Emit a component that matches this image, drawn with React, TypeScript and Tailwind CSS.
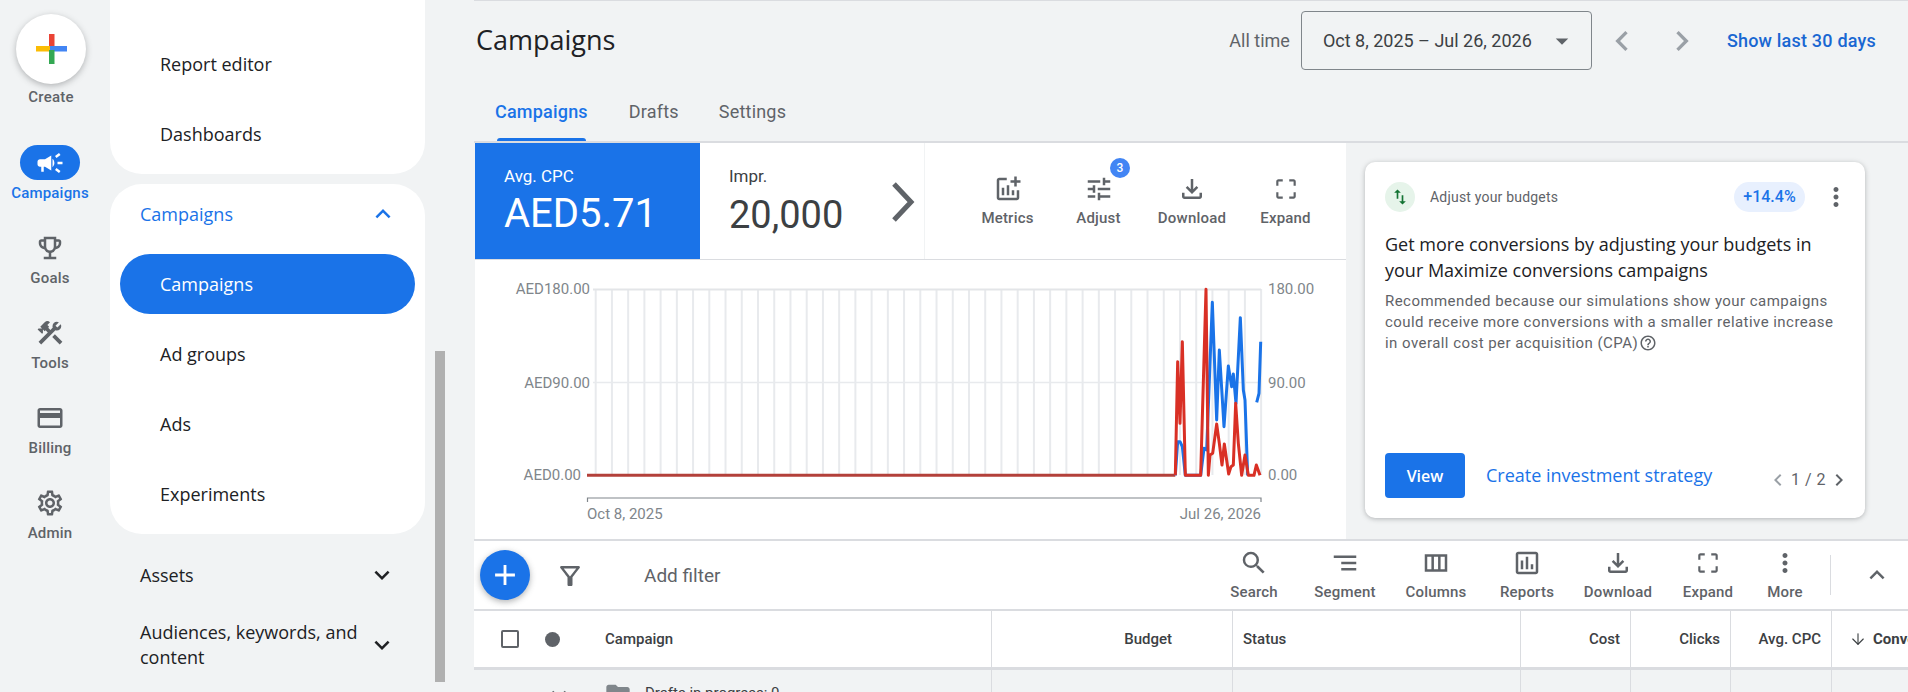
import type { ReactNode } from "react";
import { ArrowDown } from "lucide-react";
import {
  MdAdd,
  MdArrowDropDown,
  MdCampaign,
  MdChevronLeft,
  MdChevronRight,
  MdConstruction,
  MdCropFree,
  MdExpandLess,
  MdExpandMore,
  MdFolder,
  MdHelpOutline,
  MdMoreVert,
  MdOutlineAddchart,
  MdOutlineAssessment,
  MdOutlineCreditCard,
  MdOutlineEmojiEvents,
  MdOutlineFileDownload,
  MdOutlineFilterAlt,
  MdOutlineSettings,
  MdOutlineViewColumn,
  MdSearch,
  MdSegment,
  MdSwapVert,
  MdTune,
} from "react-icons/md";

const railItems = [
  { label: "Goals", icon: <MdOutlineEmojiEvents size={30} /> },
  { label: "Tools", icon: <MdConstruction size={30} /> },
  { label: "Billing", icon: <MdOutlineCreditCard size={30} /> },
  { label: "Admin", icon: <MdOutlineSettings size={30} /> },
];

const subItems = ["Ad groups", "Ads", "Experiments"];

const tableTools = [
  { label: "Search", center: "w-[90px]", icon: <MdSearch size={30} /> },
  { label: "Segment", center: "w-[92px]", icon: <MdSegment size={30} /> },
  { label: "Columns", center: "w-[90px]", icon: <MdOutlineViewColumn size={30} /> },
  { label: "Reports", center: "w-[92px]", icon: <MdOutlineAssessment size={30} /> },
  { label: "Download", center: "w-[90px]", icon: <MdOutlineFileDownload size={30} /> },
  { label: "Expand", center: "w-[90px]", icon: <MdCropFree size={26} /> },
  { label: "More", center: "w-[64px]", icon: <MdMoreVert size={30} /> },
];

const grid = Array.from({ length: 42 }, (_, i) => 595.7 + i * 16.23);

// traced from the picture, in crop units of the right hand end of the chart
const toPoints = (pts: number[][]) =>
  pts.map(([x, y]) => `${1100 + x / 3},${270 + y / 3}`).join(" ");

const redLine = toPoints([
  [226, 616], [233, 275], [240, 460], [247, 215], [256, 616], [302, 616], [318, 58], [325, 616],
  [330, 555], [338, 550], [350, 462], [358, 520], [366, 585], [373, 522], [386, 612], [393, 590],
  [400, 585], [407, 400], [415, 520], [425, 616], [435, 555], [445, 616], [462, 616], [469, 585],
  [480, 616],
]);

const blueLine = toPoints([
  [226, 616], [233, 515], [240, 515], [247, 530], [256, 616], [302, 616], [312, 535], [320, 540],
  [337, 97], [350, 450], [358, 240], [372, 470], [385, 288], [395, 350], [400, 312], [408, 400],
  [421, 143], [430, 360], [435, 390], [443, 616],
]);

function ToolButton({ label, icon, className }: { label: string; icon: ReactNode; className: string }) {
  return (
    <div className={`flex flex-col items-center text-[#5f6368] ${className}`}>
      <div className="flex h-[30px] items-center justify-center">{icon}</div>
      <span className="mt-[4px] whitespace-nowrap text-[15px] font-medium leading-[20px] tracking-[0.2px]">{label}</span>
    </div>
  );
}

function Rail() {
  return (
    <aside className="flex w-[110px] shrink-0 flex-col items-center pr-[10px]">
      <div className="mt-[14px] ml-[2px] flex size-[70px] items-center justify-center rounded-full bg-white shadow-[0_2px_6px_rgba(60,64,67,0.35)]">
        <svg width="32" height="32" viewBox="0 0 32 32">
          <rect x="14" y="1" width="5.5" height="16" fill="#ea4335" />
          <rect x="1" y="13" width="15" height="5.5" fill="#fbbc04" />
          <rect x="15" y="13" width="17" height="5.5" fill="#4285f4" />
          <rect x="14" y="17" width="5.5" height="14" fill="#34a853" />
        </svg>
      </div>
      <span className="mt-[3px] ml-[2px] text-[15px] font-medium leading-[20px] tracking-[0.2px] text-[#5f6368]">Create</span>
      <div className="mt-[38px] flex h-[85px] flex-col items-center">
        <div className="flex h-[35px] w-[60px] items-center justify-center rounded-full bg-[#1a73e8] text-white">
          <MdCampaign size={30} />
        </div>
        <span className="mt-[3px] text-[15px] font-medium leading-[20px] tracking-[0.2px] text-[#1a73e8]">Campaigns</span>
      </div>
      {railItems.map((item) => (
        <div className="flex h-[85px] flex-col items-center text-[#5f6368]" key={item.label}>
          <div className="flex h-[35px] items-center justify-center">{item.icon}</div>
          <span className="mt-[3px] text-[15px] font-medium leading-[20px] tracking-[0.2px]">{item.label}</span>
        </div>
      ))}
    </aside>
  );
}

function NavPanel() {
  const navText = "font-['Open_Sans',sans-serif] text-[18px] leading-[30px]";
  return (
    <nav className="flex w-[364px] shrink-0">
      <div className={`w-[315px] text-[#202124] ${navText}`}>
        <div className="rounded-b-[32px] bg-white pb-[5px] pl-[50px] pt-[29px]">
          <div className="flex h-[70px] items-center">Report editor</div>
          <div className="flex h-[70px] items-center">Dashboards</div>
        </div>
        <div className="mt-[10px] rounded-[32px] bg-white pb-[5px]">
          <div className="mb-[5px] flex h-[60px] items-center justify-between pl-[30px] pr-[27px] text-[#1a73e8]">
            <span>Campaigns</span>
            <MdExpandLess size={30} />
          </div>
          <div className="flex h-[70px] items-center px-[10px]">
            <div className="flex h-[60px] w-full items-center rounded-full bg-[#1a73e8] pl-[40px] font-medium text-white">Campaigns</div>
          </div>
          {subItems.map((item) => (
            <div className="flex h-[70px] items-center pl-[50px]" key={item}>
              {item}
            </div>
          ))}
        </div>
        <div className="mt-[6px] flex h-[70px] items-center justify-between pl-[30px] pr-[28px]">
          <span>Assets</span>
          <MdExpandMore size={30} />
        </div>
        <div className="flex h-[70px] items-center justify-between pl-[30px] pr-[28px]">
          <span className="w-[225px] leading-[25px]">Audiences, keywords, and content</span>
          <MdExpandMore size={30} />
        </div>
      </div>
      <div className="ml-[10px] mt-[351px] h-[331px] w-[10px] bg-[#b0b0b0]" />
    </nav>
  );
}

function Chart() {
  return (
    <svg className="block h-[279px] w-[871px]" viewBox="475 260 871 279">
      {grid.map((x) => (
        <line key={x} x1={x} x2={x} y1="289" y2="475" stroke="#e8eaed" strokeWidth="2" />
      ))}
      <line x1="593" x2="1261" y1="289.5" y2="289.5" stroke="#e3e5e8" strokeWidth="2" />
      <line x1="593" x2="1261" y1="382.5" y2="382.5" stroke="#e8eaed" strokeWidth="1.5" />
      <polyline points="587,475.3 1175.3,475.3" fill="none" stroke="#b3403a" strokeWidth="3" />
      <polyline points={blueLine} fill="none" stroke="#1a73e8" strokeWidth="3" strokeLinejoin="round" />
      <polyline points="1256.7,402.3 1259,393.3 1260.7,341.7" fill="none" stroke="#1a73e8" strokeWidth="3" strokeLinejoin="round" />
      <polyline points={redLine} fill="none" stroke="#d93025" strokeWidth="3" strokeLinejoin="round" />
      <path d="M587.5 502V498H1261V502" fill="none" stroke="#80868b" strokeWidth="1.2" />
      <g fontFamily="Roboto, sans-serif" fontSize="15" fill="#80868b">
        <text x="590" y="294" textAnchor="end">AED180.00</text>
        <text x="590" y="388" textAnchor="end">AED90.00</text>
        <text x="581" y="480" textAnchor="end">AED0.00</text>
        <text x="1268" y="294">180.00</text>
        <text x="1268" y="388">90.00</text>
        <text x="1268" y="480">0.00</text>
        <text x="587" y="519">Oct 8, 2025</text>
        <text x="1261" y="519" textAnchor="end">Jul 26, 2026</text>
      </g>
    </svg>
  );
}

function Scorecards() {
  return (
    <div className="flex h-[117px] border-b border-[#dadce0]">
      <div className="w-[225px] bg-[#1a73e8] pl-[29px] pt-[23px] text-white">
        <div className="text-[17px] leading-[20px]">Avg. CPC</div>
        <div className="mt-[5px] text-[40px] leading-[46px]">AED5.71</div>
      </div>
      <div className="relative w-[225px] border-r border-[#f1f3f4] pl-[29px] pt-[23px] text-[#3c4043]">
        <div className="text-[17px] leading-[20px]">Impr.</div>
        <div className="mt-[6px] text-[38px] leading-[46px]">20,000</div>
        <svg className="absolute left-[189px] top-[38px]" width="30" height="42" viewBox="0 0 30 42">
          <path d="M5 3l17 18L5 39" fill="none" stroke="#5f6368" strokeWidth="5" />
        </svg>
      </div>
      <div className="flex flex-1 pl-[37px] pt-[31px]">
        <ToolButton className="w-[91px]" label="Metrics" icon={<MdOutlineAddchart size={30} />} />
        <div className="relative w-[91px]">
          <ToolButton className="w-[91px]" label="Adjust" icon={<MdTune size={30} />} />
          <span className="absolute -top-[16px] left-[57px] flex size-[20px] items-center justify-center rounded-full bg-[#4285f4] text-[12px] font-medium text-white">3</span>
        </div>
        <ToolButton className="w-[96px]" label="Download" icon={<MdOutlineFileDownload size={30} />} />
        <ToolButton className="w-[91px]" label="Expand" icon={<MdCropFree size={26} />} />
      </div>
    </div>
  );
}

function RecommendationCard() {
  return (
    <div className="mx-[19px] mt-[19px] flex h-[356px] w-[500px] flex-col rounded-[10px] bg-white px-[20px] shadow-[0_1px_5px_rgba(60,64,67,0.35)]">
      <div className="mt-[20px] flex h-[30px] items-center">
        <div className="flex size-[30px] items-center justify-center rounded-full bg-[#e6f4ea] text-[#137333]">
          <MdSwapVert size={20} />
        </div>
        <span className="ml-[15px] text-[14px] tracking-[0.2px] text-[#5f6368]">Adjust your budgets</span>
        <span className="ml-auto flex h-[30px] w-[71px] items-center justify-center rounded-full bg-[#e8f0fe] text-[16px] font-medium text-[#1a73e8]">+14.4%</span>
        <span className="ml-[16px] mr-[-6px] text-[#5f6368]">
          <MdMoreVert size={30} />
        </span>
      </div>
      <h3 className="mt-[19px] max-w-[445px] font-['Open_Sans',sans-serif] text-[18px] font-medium leading-[26px] text-[#202124]">
        Get more conversions by adjusting your budgets in your Maximize conversions campaigns
      </h3>
      <p className="mt-[8px] text-[15px] leading-[21px] tracking-[0.45px] text-[#5f6368]">
        Recommended because our simulations show your campaigns could receive more conversions with a smaller relative increase in overall cost per acquisition (CPA)
        <MdHelpOutline className="ml-[1px] inline align-[-4px]" size={18} />
      </p>
      <div className="mt-auto mb-[20px] flex items-center">
        <button className="h-[45px] w-[80px] rounded-[4px] bg-[#1a73e8] font-['Open_Sans',sans-serif] text-[16px] font-semibold text-white">View</button>
        <span className="ml-[21px] font-['Open_Sans',sans-serif] text-[18px] font-medium text-[#1a73e8]">Create investment strategy</span>
        <div className="ml-auto mr-[-6px] mt-[9px] flex items-center text-[#5f6368]">
          <MdChevronLeft className="text-[#9aa0a6]" size={24} />
          <span className="mx-[1px] text-[16px] tracking-[0.5px]">1 / 2</span>
          <MdChevronRight size={24} />
        </div>
      </div>
    </div>
  );
}

function TableHeadCell({ width, children, right }: { width: string; children: ReactNode; right?: boolean }) {
  return (
    <div className={`flex h-full shrink-0 items-center border-r border-[#dadce0] px-[10px] text-[15px] font-medium text-[#3c4043] ${width} ${right ? "justify-end" : ""}`}>
      {children}
    </div>
  );
}

export default function App() {
  return (
    <div className="flex h-[692px] w-[1908px] overflow-hidden bg-[#f1f3f4] font-['Roboto',sans-serif]">
      <Rail />
      <NavPanel />
      <main className="min-w-0 flex-1 border-t border-[#dadce0]">
        <header className="flex h-[82px] items-center pb-[3px] pr-[32px]">
          <h1 className="ml-[2px] font-['Open_Sans',sans-serif] text-[27px] text-[#202124]">Campaigns</h1>
          <span className="ml-auto text-[18px] text-[#5f6368]">All time</span>
          <div className="ml-[11px] flex h-[59px] w-[291px] items-center rounded-[4px] border border-[#80868b] pl-[21px] pr-[14px] text-[18px] text-[#3c4043]">
            Oct 8, 2025 – Jul 26, 2026
            <MdArrowDropDown className="ml-auto text-[#5f6368]" size={30} />
          </div>
          <MdChevronLeft className="ml-[10px] text-[#9aa0a6]" size={40} />
          <MdChevronRight className="ml-[20px] text-[#9aa0a6]" size={40} />
          <span className="ml-[25px] text-[18px] font-medium tracking-[0.2px] text-[#1967d2]">Show last 30 days</span>
        </header>
        <div className="flex h-[60px] items-center border-b-2 border-[#dadce0] pb-[2px] pl-[21px] text-[18px] tracking-[0.2px] text-[#5f6368]">
          <span className="relative flex h-full items-center font-medium text-[#1a73e8]">
            Campaigns
            <span className="absolute inset-x-[2px] -bottom-[2px] h-[3px] rounded-t-[3px] bg-[#1a73e8]" />
          </span>
          <span className="ml-[41px]">Drafts</span>
          <span className="ml-[40px]">Settings</span>
        </div>
        <div className="flex h-[396px]">
          <div className="ml-[1px] w-[871px] bg-white">
            <Scorecards />
            <Chart />
          </div>
          <RecommendationCard />
        </div>
        <div className="flex h-[72px] items-center border-y-2 border-[#dadce0] bg-white pl-[6px]">
          <div className="flex size-[50px] shrink-0 items-center justify-center rounded-full bg-[#1a73e8] text-white shadow-[0_2px_6px_rgba(60,64,67,0.4)]">
            <MdAdd size={34} />
          </div>
          <MdOutlineFilterAlt className="ml-[25px] mt-[2px] text-[#5f6368]" size={30} />
          <span className="ml-[59px] mt-[2px] text-[19px] text-[#5f6368]">Add filter</span>
          <div className="-mt-[1px] ml-auto flex items-center">
            {tableTools.map((tool) => (
              <ToolButton className={tool.center} key={tool.label} label={tool.label} icon={tool.icon} />
            ))}
            <div className="ml-[13px] h-[40px] w-px bg-[#dadce0]" />
            <MdExpandLess className="ml-[31px] mr-[16px] text-[#5f6368]" size={30} />
          </div>
        </div>
        <div className="flex h-[59px] border-b-[3px] border-[#dadce0] bg-white">
          <div className="flex h-full w-[518px] shrink-0 items-center border-r border-[#dadce0] pl-[27px] text-[15px] font-medium text-[#3c4043]">
            <span className="size-[18px] rounded-[2px] border-2 border-[#5f6368]" />
            <span className="ml-[26px] size-[15px] rounded-full bg-[#5f6368]" />
            <span className="ml-[45px]">Campaign</span>
          </div>
          <TableHeadCell width="w-[241px] pr-[60px]" right>Budget</TableHeadCell>
          <TableHeadCell width="w-[288px]">Status</TableHeadCell>
          <TableHeadCell width="w-[110px]" right>Cost</TableHeadCell>
          <TableHeadCell width="w-[100px]" right>Clicks</TableHeadCell>
          <TableHeadCell width="w-[101px]" right>Avg. CPC</TableHeadCell>
          <div className="flex h-full flex-1 items-center overflow-hidden whitespace-nowrap pl-[17px] text-[15px] font-bold text-[#3c4043]">
            <ArrowDown className="mr-[6px] shrink-0" size={18} strokeWidth={1.5} />
            Conversions
          </div>
        </div>
        <div className="flex h-[40px]">
          <div className="flex h-full w-[518px] shrink-0 items-start border-r border-[#dadce0] pl-[70px] pt-[13px] text-[15px] text-[#3c4043]">
            <MdExpandMore className="-mt-[3px] text-[#5f6368]" size={30} />
            <MdFolder className="ml-[30px] -mt-[3px] text-[#80868b]" size={28} />
            <span className="ml-[13px] leading-[20px]">Drafts in progress: 0</span>
          </div>
          <div className="w-[241px] shrink-0 border-r border-[#dadce0]" />
          <div className="w-[288px] shrink-0 border-r border-[#dadce0]" />
          <div className="w-[110px] shrink-0 border-r border-[#dadce0]" />
          <div className="w-[100px] shrink-0 border-r border-[#dadce0]" />
          <div className="w-[101px] shrink-0 border-r border-[#dadce0]" />
        </div>
      </main>
    </div>
  );
}
